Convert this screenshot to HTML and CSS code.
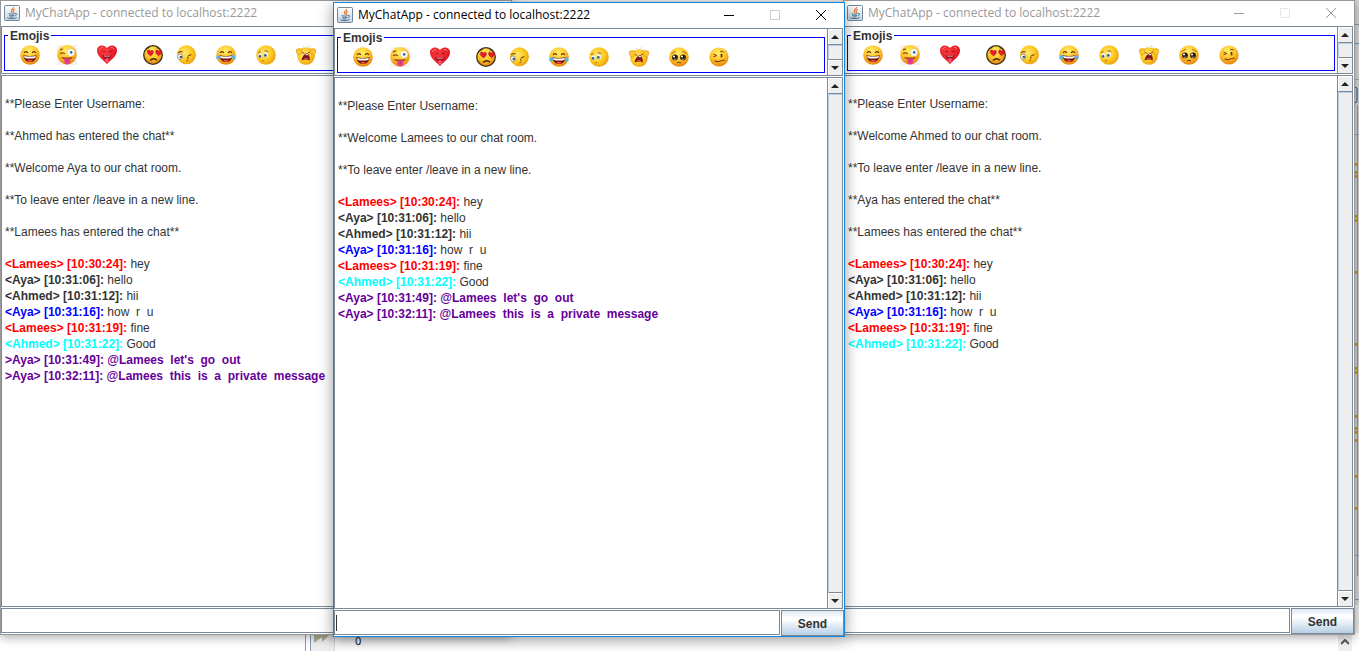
FILE: index.html
```html
<!DOCTYPE html>
<html lang="en">
<head>
<meta charset="utf-8">
<title>MyChatApp</title>
<link rel="stylesheet" href="styles.css">
</head>
<body>
<svg class="sprite" aria-hidden="true">
  <defs>
    <radialGradient id="skin" cx="45%" cy="30%" r="70%"><stop offset="0" stop-color="#fff06a"/><stop offset=".55" stop-color="#ffc428"/><stop offset="1" stop-color="#e5820c"/></radialGradient>
    <radialGradient id="soft" cx="40%" cy="40%" r="65%"><stop offset="0" stop-color="#ffe87a"/><stop offset=".6" stop-color="#fdc91e"/><stop offset="1" stop-color="#e99c12"/></radialGradient>
    <radialGradient id="red" cx="40%" cy="30%" r="75%"><stop offset="0" stop-color="#ff3c3c"/><stop offset="1" stop-color="#d90d1c"/></radialGradient>
    <linearGradient id="plate" x1="0" y1="0" x2="0" y2="1"><stop offset="0" stop-color="#fff"/><stop offset="1" stop-color="#c3d3df"/></linearGradient>
  </defs>
  <symbol id="java" viewBox="0 0 16 16">
    <rect x=".5" y=".5" width="15" height="15" rx="1" fill="url(#plate)" stroke="#6f8799"/>
    <path d="M9.600 2c.5 1.600-2.700 2.300-2.300 4 .1.700.8 1 .8 1.700M10.800 4.300c-1.600.7-2.300 1.400-1.400 2.300.3.500 0 1-.5 1.200" fill="none" stroke="#e8762c" stroke-width="1.100"/>
    <path d="M4.700 8.600c1.500.7 4.600.7 6 0M5.200 10.300c1.200.6 3.800.6 5 0M5.800 11.800c1 .4 2.700.4 3.700 0M3.200 12.600c1.600 1.400 7.800 1.300 9.300-.1M11 8.500c2.300-.4 2 1.700-.1 2.300" fill="none" stroke="#41698d" stroke-width=".95"/>
  </symbol>
  <symbol id="grin" viewBox="0 0 20 20">
    <circle cx="10" cy="10" r="9.800" fill="url(#skin)"/>
    <path d="M4 8q1.700-2.600 3.900-.2M12.100 7.800q2.200-2.400 3.900.2" fill="none" stroke="#653000" stroke-width="1.100"/>
    <path d="M3.300 10.300q6.700 1.300 13.400 0-.8 6.800-6.700 6.800t-6.700-6.800z" fill="#6c1608"/>
    <path d="M4.100 10.900q5.900 1.100 11.800 0l-.6 2.200q-5.300 1-10.600 0z" fill="#fff"/>
    <path d="M7 16q3-2.400 6 0-3 1.700-6 0z" fill="#ef4b4b"/>
  </symbol>
  <symbol id="wink" viewBox="0 0 20 20">
    <rect width="20" height="20" fill="#f4f2f1"/>
    <circle cx="10" cy="9.700" r="9.700" fill="url(#skin)"/>
    <path d="M3 8.900q2.300-2 5 0M3 5.200q1.500-1.400 3-1" fill="none" stroke="#8a4b10" stroke-width="1.100"/>
    <circle cx="14" cy="7.400" r="3.500" fill="#fff" stroke="#c9c9c9" stroke-width=".4"/>
    <circle cx="14.200" cy="7.400" r="1.300" fill="#35679b"/>
    <path d="M4 12q6 1.200 12 0-1.500 2.700-5.700 2.800Q5.800 14.700 4 12z" fill="#8d3a18"/>
    <path d="M7.300 13.500h6v3.600q-.4 2.300-3 2.300t-3-2.300z" fill="#e83e91"/>
    <path d="M10.300 14.200v2.600" stroke="#bc1763" stroke-width=".7"/>
  </symbol>
  <symbol id="heart" viewBox="0 0 20 20">
    <path d="M10 19.300C8.300 16 0 12.300 0 5.500 0 .1 7-1.300 10 3.100 13-1.300 20 .1 20 5.500c0 6.800-8.300 10.500-10 13.800z" fill="url(#red)"/>
    <path d="M2.200 5q1.300-2.800 3.600-2.700M14 2.400q2 0 3.300 1.500" fill="none" stroke="#ff9292" stroke-width=".8"/>
    <path d="M5.300 7q1.700-1.600 3.400 0M11.500 7q1.600-1.600 3.300 0" fill="none" stroke="#8d1019" stroke-width=".9"/>
    <path d="M5.400 9.800q4.600 1.200 9.200 0-1 4.900-4.600 4.900T5.400 9.800z" fill="#9b101b"/>
    <path d="M6.600 10.500q3.400.7 6.800 0l-.6 1H7.200z" fill="#f4c9c9"/>
    <path d="M8.500 13.200h3v3.300q-1.500 2-3 0z" fill="#ff5b78"/>
  </symbol>
  <symbol id="sad" viewBox="0 0 20 20">
    <circle cx="10" cy="10" r="9.300" fill="url(#skin)" stroke="#3c3316" stroke-width="1.300"/>
    <path d="M2.600 4.800q2-2 4-2.300M13.600 2.700q2 .5 3.500 2" fill="none" stroke="#443310"/>
    <path d="M7.600 11C5.900 9.800 4 8.400 4.200 6.500c.3-1.900 2.500-1.900 3.200-.4 1-1.400 3.200-1 3.100.8 0 1.800-1.500 3-2.900 4.100zM15.600 10.700c-1.700-1.200-3.300-2.400-3.100-4.200.2-1.800 2.300-1.900 3-.4 1-1.400 3.400-1 3.300.7 0 1.700-1.700 2.900-3.200 3.900z" fill="#e91c2b" stroke="#9d0e18" stroke-width=".4"/>
    <path d="M7 15.500q3.600-3.400 7-.2" fill="none" stroke="#392300" stroke-width="1.200"/>
  </symbol>
  <symbol id="peek" viewBox="0 0 20 20">
    <circle cx="10.400" cy="9.800" r="9.500" fill="url(#soft)"/>
    <ellipse cx="4" cy="11.700" rx="2.500" ry="2.800" fill="#fff" stroke="#77745e" stroke-width=".7"/>
    <circle cx="4.800" cy="12" r="1.300" fill="#315469"/>
    <path d="M2 8q2-2.200 4.600-1M12 11l3.400-1.400M11.400 11.600q1.200 1 .2 2.200M10.400 15.800q1.400 0 1.500-1" fill="none" stroke="#7a4604" stroke-width="1.100"/>
  </symbol>
  <symbol id="joy" viewBox="0 0 20 20">
    <use href="#grin"/>
    <path d="M3.900 9.700C1.200 10 .1 11.700.3 13.200c.4 1.800 3 1.700 3.500-.2zM16.100 9.700c2.700.3 3.800 2 3.600 3.500-.4 1.800-3 1.700-3.500-.2z" fill="#50b7ee"/>
  </symbol>
  <symbol id="ponder" viewBox="0 0 20 20">
    <circle cx="10" cy="10" r="9.800" fill="url(#soft)"/>
    <ellipse cx="4.200" cy="10.800" rx="2.100" ry="2.400" fill="#eef5f9"/>
    <ellipse cx="9.900" cy="9.800" rx="2.200" ry="2.500" fill="#eef5f9"/>
    <circle cx="4" cy="11.400" r="1.400" fill="#3d5f82"/><circle cx="9.300" cy="10.400" r="1.400" fill="#3d5f82"/>
    <path d="M2 7.800l2.600-1.600M8.600 5.700l3.600.7" fill="none" stroke="#9b6011"/>
    <path d="M5.500 16q1.400-.8 2.800-.2" fill="none" stroke="#b9780f"/>
  </symbol>
  <symbol id="cry" viewBox="0 0 20 20">
    <circle cx="10" cy="11" r="8.800" fill="url(#soft)"/>
    <path d="M.4 4.600Q3 2.800 6 4.200L5.400 9 2.400 10.200.8 8zM19.600 4.600Q17 2.800 14 4.200l.8 4.600 3 1.400L19.400 8z" fill="#fbc62c" stroke="#e39a18" stroke-width=".7"/>
    <path d="M7 1l1 1.500M12.500.2L12 2M15 1.400l-1.300 1.500" stroke="#c5cbd2" stroke-width=".8"/>
    <path d="M6 7.500l2.500 1M14 7l-2 1" stroke="#7d4310" stroke-width=".9"/>
    <path d="M5.600 15.600Q6.400 9.400 11.400 8q2.600 2.500 2.400 7.400-3.800-1.800-8.200.2z" fill="#791919"/>
    <path d="M7.400 14.500q2-2.600 5.400-.3-2.700-.5-5.400.3z" fill="#ee5050"/>
    <path d="M8.800 10l2.500-1.300 1.200 1.500z" fill="#fff"/>
  </symbol>
  <symbol id="plead" viewBox="0 0 20 20">
    <circle cx="10" cy="10" r="9.800" fill="url(#skin)"/>
    <path d="M2.700 7q1.500-2.400 4-2.600M13.300 4.400q2.700.3 4 2.600" fill="none" stroke="#a95d0c"/>
    <circle cx="6" cy="10.400" r="2.900" fill="#2b1a10"/><circle cx="14" cy="10.400" r="2.900" fill="#2b1a10"/>
    <circle cx="5" cy="9.500" r="1" fill="#fff"/><circle cx="13" cy="9.500" r="1" fill="#fff"/>
    <path d="M4.600 12.100q1.500.8 2.900-.2M12.600 12.100q1.500.8 2.900-.2" fill="none" stroke="#ddd" stroke-width=".7"/>
    <path d="M8 15.800q2-1.200 4 0" fill="none" stroke="#713300"/>
  </symbol>
  <symbol id="woozy" viewBox="0 0 20 20">
    <circle cx="10" cy="10" r="9.600" fill="url(#skin)"/>
    <path d="M4.300 7.200l3.700 1.300-3.600 1.300M11 5q2-1.700 3.700.2" fill="none" stroke="#80430b"/>
    <path d="M11.600 6.900h1.800v3.500h-1.800z" fill="#69350b"/>
    <path d="M5.600 13.800q2.800 1.600 5.100.4t5-.9" fill="none" stroke="#80430b" stroke-width="1.200"/>
  </symbol>
</svg>

<main class="desktop">
  <div class="ide">
    <div class="ide-left"></div>
    <div class="ide-gutter"><svg width="16" height="9" viewBox="0 0 16 9" aria-hidden="true"><path d="M0 0h7v2l2-2h7L8 8V3L0 9z" fill="#acb094"/></svg></div>
    <div class="ide-text">0</div>
    <div class="ide-scroll"><svg width="8" height="7" viewBox="0 0 8 7" aria-hidden="true"><path d="M0 5l4-4 4 4" fill="none" stroke="#555" stroke-width="2"/></svg></div>
  </div>
  <div class="ide-edge" aria-hidden="true">
    <svg width="5" height="605" viewBox="0 0 5 605">
      <path d="M0 24.500h5M0 43.500h5M0 134.500h5M0 555.500h5M0 599.500h5" stroke="#7f9db9"/>
      <path d="M0 79.500h5" stroke="#aaa"/>
      <path d="M1 87.500h1q1 0 1 2v11q0 2-1 2H1" fill="none" stroke="#174a80"/>
      <path d="M3.500 105v471" stroke="#7f9db9"/>
      <path d="M2 163v3M2 171v3M2 175v3M2 215v3M2 219v3M2 271v3M2 343v3M2 367v3M2 371v3M2 415v3M2 427v3M2 431v3M2 439v3M2 475v3M2 507v3" stroke="#c99a18" stroke-width="2"/>
    </svg>
  </div>

  <section class="window window-left">
    <header class="titlebar">
      <svg class="app-icon" aria-hidden="true"><use href="#java"/></svg>
      <h2 class="title">MyChatApp - connected to localhost:2222</h2>
    </header>
    <div class="pane">
      <fieldset class="emojis">
        <legend>Emojis</legend>
        <div class="emoji-row">
          <button class="emoji" aria-label="Grin"><svg><use href="#grin"/></svg></button>
          <button class="emoji" aria-label="Wink"><svg><use href="#wink"/></svg></button>
          <button class="emoji" aria-label="Heart"><svg><use href="#heart"/></svg></button>
          <button class="emoji" aria-label="Sad heart eyes"><svg><use href="#sad"/></svg></button>
          <button class="emoji" aria-label="Peek"><svg><use href="#peek"/></svg></button>
          <button class="emoji" aria-label="Joy"><svg><use href="#joy"/></svg></button>
          <button class="emoji" aria-label="Ponder"><svg><use href="#ponder"/></svg></button>
          <button class="emoji" aria-label="Cry"><svg><use href="#cry"/></svg></button>
        </div>
      </fieldset>
    </div>
    <div class="pane pane-chat">
      <div class="log">
        <p class="notice">**Please Enter Username:</p>
        <p class="notice">**Ahmed has entered the chat**</p>
        <p class="notice">**Welcome Aya to our chat room.</p>
        <p class="notice">**To leave enter /leave in a new line.</p>
        <p class="notice">**Lamees has entered the chat**</p>
        <p><b class="red">&lt;Lamees&gt; [10:30:24]:</b> hey</p>
        <p><b>&lt;Aya&gt; [10:31:06]:</b> hello</p>
        <p><b>&lt;Ahmed&gt; [10:31:12]:</b> hii</p>
        <p><b class="blue">&lt;Aya&gt; [10:31:16]:</b> how  r  u</p>
        <p><b class="red">&lt;Lamees&gt; [10:31:19]:</b> fine</p>
        <p><b class="cyan">&lt;Ahmed&gt; [10:31:22]:</b> Good</p>
        <p><b class="purple">&gt;Aya&gt; [10:31:49]: @Lamees  let's  go  out</b></p>
        <p><b class="purple">&gt;Aya&gt; [10:32:11]: @Lamees  this  is  a  private  message</b></p>
      </div>
    </div>
    <form class="composer">
      <div class="field"><input type="text" aria-label="Message"></div>
    </form>
  </section>

  <section class="window window-right">
    <header class="titlebar">
      <svg class="app-icon" aria-hidden="true"><use href="#java"/></svg>
      <h2 class="title">MyChatApp - connected to localhost:2222</h2>
      <div class="controls">
        <button aria-label="Minimize"><svg viewBox="0 0 10 10"><path d="M0 5.500h10"/></svg></button>
        <button aria-label="Maximize" disabled><svg viewBox="0 0 10 10"><path d="M.5.500h9v9h-9z"/></svg></button>
        <button aria-label="Close"><svg viewBox="0 0 10 10"><path d="M0 0l10 10M10 0L0 10"/></svg></button>
      </div>
    </header>
    <div class="pane">
      <fieldset class="emojis">
        <legend>Emojis</legend>
        <div class="emoji-row">
          <button class="emoji" aria-label="Grin"><svg><use href="#grin"/></svg></button>
          <button class="emoji" aria-label="Wink"><svg><use href="#wink"/></svg></button>
          <button class="emoji" aria-label="Heart"><svg><use href="#heart"/></svg></button>
          <button class="emoji" aria-label="Sad heart eyes"><svg><use href="#sad"/></svg></button>
          <button class="emoji" aria-label="Peek"><svg><use href="#peek"/></svg></button>
          <button class="emoji" aria-label="Joy"><svg><use href="#joy"/></svg></button>
          <button class="emoji" aria-label="Ponder"><svg><use href="#ponder"/></svg></button>
          <button class="emoji" aria-label="Cry"><svg><use href="#cry"/></svg></button>
          <button class="emoji" aria-label="Plead"><svg><use href="#plead"/></svg></button>
          <button class="emoji" aria-label="Woozy"><svg><use href="#woozy"/></svg></button>
        </div>
      </fieldset>
      <div class="scrollbar">
        <button class="arrow" aria-label="Scroll up"><svg viewBox="0 0 8 4"><path d="M4 0l4 4H0z"/></svg></button>
        <div class="thumb"></div>
        <button class="arrow" aria-label="Scroll down"><svg viewBox="0 0 8 4"><path d="M0 0h8L4 4z"/></svg></button>
      </div>
    </div>
    <div class="pane pane-chat">
      <div class="log">
        <p class="notice">**Please Enter Username:</p>
        <p class="notice">**Welcome Ahmed to our chat room.</p>
        <p class="notice">**To leave enter /leave in a new line.</p>
        <p class="notice">**Aya has entered the chat**</p>
        <p class="notice">**Lamees has entered the chat**</p>
        <p><b class="red">&lt;Lamees&gt; [10:30:24]:</b> hey</p>
        <p><b>&lt;Aya&gt; [10:31:06]:</b> hello</p>
        <p><b>&lt;Ahmed&gt; [10:31:12]:</b> hii</p>
        <p><b class="blue">&lt;Aya&gt; [10:31:16]:</b> how  r  u</p>
        <p><b class="red">&lt;Lamees&gt; [10:31:19]:</b> fine</p>
        <p><b class="cyan">&lt;Ahmed&gt; [10:31:22]:</b> Good</p>
      </div>
      <div class="scrollbar">
        <button class="arrow" aria-label="Scroll up"><svg viewBox="0 0 8 4"><path d="M4 0l4 4H0z"/></svg></button>
        <div class="thumb"></div>
        <button class="arrow" aria-label="Scroll down"><svg viewBox="0 0 8 4"><path d="M0 0h8L4 4z"/></svg></button>
      </div>
    </div>
    <form class="composer">
      <div class="field"><input type="text" aria-label="Message"></div>
      <button class="send" type="button">Send</button>
    </form>
  </section>

  <section class="window window-main">
    <header class="titlebar">
      <svg class="app-icon" aria-hidden="true"><use href="#java"/></svg>
      <h1 class="title">MyChatApp - connected to localhost:2222</h1>
      <div class="controls">
        <button aria-label="Minimize"><svg viewBox="0 0 10 10"><path d="M0 5.500h10"/></svg></button>
        <button aria-label="Maximize" disabled><svg viewBox="0 0 10 10"><path d="M.5.500h9v9h-9z"/></svg></button>
        <button aria-label="Close"><svg viewBox="0 0 10 10"><path d="M0 0l10 10M10 0L0 10"/></svg></button>
      </div>
    </header>
    <div class="pane">
      <fieldset class="emojis">
        <legend>Emojis</legend>
        <div class="emoji-row">
          <button class="emoji" aria-label="Grin"><svg><use href="#grin"/></svg></button>
          <button class="emoji" aria-label="Wink"><svg><use href="#wink"/></svg></button>
          <button class="emoji" aria-label="Heart"><svg><use href="#heart"/></svg></button>
          <button class="emoji" aria-label="Sad heart eyes"><svg><use href="#sad"/></svg></button>
          <button class="emoji" aria-label="Peek"><svg><use href="#peek"/></svg></button>
          <button class="emoji" aria-label="Joy"><svg><use href="#joy"/></svg></button>
          <button class="emoji" aria-label="Ponder"><svg><use href="#ponder"/></svg></button>
          <button class="emoji" aria-label="Cry"><svg><use href="#cry"/></svg></button>
          <button class="emoji" aria-label="Plead"><svg><use href="#plead"/></svg></button>
          <button class="emoji" aria-label="Woozy"><svg><use href="#woozy"/></svg></button>
        </div>
      </fieldset>
      <div class="scrollbar">
        <button class="arrow" aria-label="Scroll up"><svg viewBox="0 0 8 4"><path d="M4 0l4 4H0z"/></svg></button>
        <div class="thumb"></div>
        <button class="arrow" aria-label="Scroll down"><svg viewBox="0 0 8 4"><path d="M0 0h8L4 4z"/></svg></button>
      </div>
    </div>
    <div class="pane pane-chat">
      <div class="log">
        <p class="notice">**Please Enter Username:</p>
        <p class="notice">**Welcome Lamees to our chat room.</p>
        <p class="notice">**To leave enter /leave in a new line.</p>
        <p><b class="red">&lt;Lamees&gt; [10:30:24]:</b> hey</p>
        <p><b>&lt;Aya&gt; [10:31:06]:</b> hello</p>
        <p><b>&lt;Ahmed&gt; [10:31:12]:</b> hii</p>
        <p><b class="blue">&lt;Aya&gt; [10:31:16]:</b> how  r  u</p>
        <p><b class="red">&lt;Lamees&gt; [10:31:19]:</b> fine</p>
        <p><b class="cyan">&lt;Ahmed&gt; [10:31:22]:</b> Good</p>
        <p><b class="purple">&lt;Aya&gt; [10:31:49]: @Lamees  let's  go  out</b></p>
        <p><b class="purple">&lt;Aya&gt; [10:32:11]: @Lamees  this  is  a  private  message</b></p>
      </div>
      <div class="scrollbar">
        <button class="arrow" aria-label="Scroll up"><svg viewBox="0 0 8 4"><path d="M4 0l4 4H0z"/></svg></button>
        <div class="thumb"></div>
        <button class="arrow" aria-label="Scroll down"><svg viewBox="0 0 8 4"><path d="M0 0h8L4 4z"/></svg></button>
      </div>
    </div>
    <form class="composer">
      <div class="field active"><input type="text" aria-label="Message"></div>
      <button class="send" type="button">Send</button>
    </form>
  </section>
</main>
</body>
</html>
```
FILE: styles.css
```css
* { box-sizing: border-box; }
body { margin: 0; font: 12px/16px "Liberation Sans", Arial, sans-serif; color: #333; }
button, input { font: inherit; color: inherit; margin: 0; padding: 0; border: 0; background: none; border-radius: 0; }
h1, h2, p { margin: 0; }
.sprite { position: absolute; width: 0; height: 0; }

.desktop { position: relative; height: 100vh; overflow: hidden; background: #ececec; display: flex; flex-direction: column; justify-content: flex-end; }

/* Editor behind the chat windows */
.ide { display: flex; height: 18px; background: #fff; }
.ide-left { width: 306px; border-right: 1px solid #7f9db9; }
.ide-gutter { display: flex; width: 25px; margin-left: 4px; padding: 1px 0 0 3px; background: #eee; border-left: 1px solid #7f9db9; border-right: 1px solid #d8d8d8; }
.ide-text { flex: 1; padding: 0 20px; font: 11px/16px "Noto Sans", sans-serif; color: #111; }
.ide-scroll { width: 14px; margin-right: 7px; padding: 1px 3px; background: #eee; }
.ide-edge { position: absolute; top: 0; right: 0; width: 5px; height: 605px; background: #d6d6d6; }
.ide-edge svg { display: block; }

/* Window frame */
.window { position: absolute; top: 0; bottom: 16px; width: 512px; display: flex; flex-direction: column; gap: 1px; padding-right: 1px; background: #fff; border: 1px solid #999; box-shadow: 0 2px 10px rgba(0, 0, 0, .35); }
.window-left { left: 0; }
.window-right { left: 843px; }
.window-main { left: 333px; top: 2px; bottom: 14px; border-color: #1883d7; box-shadow: 0 3px 14px rgba(0, 0, 0, .4); }
.titlebar { display: flex; align-items: center; height: 24px; padding-left: 3px; gap: 5px; }
.app-icon { width: 16px; height: 16px; flex: none; }
.title { flex: 1; font: 12px/16px "Segoe UI", "Open Sans", sans-serif; color: #999; white-space: nowrap; }
.window-main .title { color: #000; }
.controls { display: flex; margin-right: -1px; }
.controls button { display: flex; width: 46px; height: 24px; align-items: center; justify-content: center; }
.controls svg { width: 10px; height: 10px; fill: none; stroke: #999; }
.window-main .controls svg { stroke: #000; }
.controls button:disabled svg { stroke: #e6e6e6; }
.window-main .controls button:disabled svg { stroke: #ccc; }

/* Scroll panes */
.pane { display: flex; border: 1px solid #7a8a99; }
.pane-chat { flex: 1; min-height: 0; }
.emojis { flex: 1; min-width: 0; margin: 1px 2px 2px; padding: 2px 3px 5px; border: 1px solid #00f; }
.emojis legend { padding: 1px 2px 0; font-weight: bold; line-height: 14px; }
.emoji-row { display: grid; grid-template-columns: 37px 40px 46px 33px repeat(6, 40px); padding-left: 12px; }
.emoji { width: 20px; height: 20px; }
.emoji svg { display: block; width: 20px; height: 20px; }
.log { flex: 1; min-width: 0; padding: 20px 3px 0; }
.log p { white-space: pre-wrap; }
.log .notice { margin-bottom: 16px; }
.red { color: #f00; }
.blue { color: #00f; }
.cyan { color: #0ff; }
.purple { color: #609; }

.scrollbar { display: flex; flex-direction: column; width: 15px; border-left: 1px solid #7a8a99; background: #eee; }
.arrow { display: flex; align-items: center; justify-content: center; height: 15px; flex: none; box-shadow: inset 1px 1px #fff; }
.arrow svg { width: 8px; height: 4px; fill: #222; }
.thumb { flex: 1; border: 1px solid #7a8a99; border-right: 0; border-left-color: #b8cfe5; box-shadow: inset 0 1px #b8cfe5; }

/* Message entry */
.composer { display: flex; align-items: flex-start; gap: 1px; height: 26px; margin-right: -1px; }
.field { position: relative; flex: 1; height: 25px; border: 1px solid #7a8a99; }
.field input { display: block; width: 100%; height: 23px; padding: 0 2px; outline: 0; }
.field.active::before { content: ""; position: absolute; left: 1px; top: 4px; width: 1px; height: 16px; background: #333; }
.send { width: 63px; height: 26px; padding-top: 2px; border: 1px solid #7a8a99; font-weight: bold; background: linear-gradient(#dde8f3, #fff 30%, #fff 35%, #b8cfe5); }
```
